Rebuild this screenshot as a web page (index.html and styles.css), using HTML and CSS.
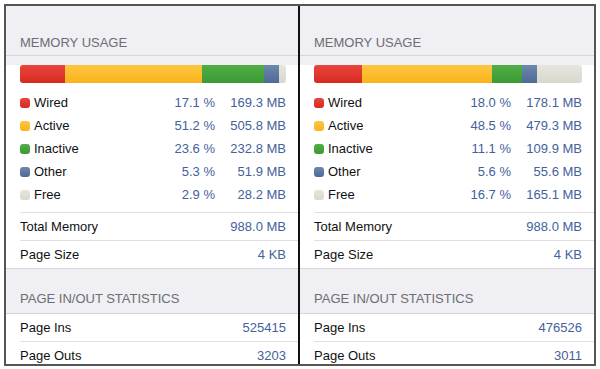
FILE: index.html
```html
<!DOCTYPE html>
<html lang="en">
<head>
    <meta charset="UTF-8">
    <title>Memory Usage</title>
    <link rel="stylesheet" href="styles.css">
</head>
<body>
    <div class="frame">
        <!-- Left device -->
        <div class="panel">
            <div class="section-header">Memory Usage</div>
            <div class="group">
                <div class="usage-bar">
                    <span class="seg wired" style="width: 17.1%"></span>
                    <span class="seg active" style="width: 51.2%"></span>
                    <span class="seg inactive" style="width: 23.6%"></span>
                    <span class="seg other" style="width: 5.3%"></span>
                    <span class="seg free" style="width: 2.8%"></span>
                </div>
                <div class="legend">
                    <div class="legend-row"><span class="label"><i class="dot wired"></i>Wired</span><span class="value">17.1 %</span><span class="value">169.3 MB</span></div>
                    <div class="legend-row"><span class="label"><i class="dot active"></i>Active</span><span class="value">51.2 %</span><span class="value">505.8 MB</span></div>
                    <div class="legend-row"><span class="label"><i class="dot inactive"></i>Inactive</span><span class="value">23.6 %</span><span class="value">232.8 MB</span></div>
                    <div class="legend-row"><span class="label"><i class="dot other"></i>Other</span><span class="value">5.3 %</span><span class="value">51.9 MB</span></div>
                    <div class="legend-row"><span class="label"><i class="dot free"></i>Free</span><span class="value">2.9 %</span><span class="value">28.2 MB</span></div>
                </div>
                <div class="row"><span>Total Memory</span><span class="value">988.0 MB</span></div>
                <div class="row"><span>Page Size</span><span class="value">4 KB</span></div>
            </div>
            <div class="section-header second">Page In/Out Statistics</div>
            <div class="group">
                <div class="row first"><span>Page Ins</span><span class="value">525415</span></div>
                <div class="row"><span>Page Outs</span><span class="value">3203</span></div>
            </div>
        </div>

        <!-- Right device -->
        <div class="panel">
            <div class="section-header">Memory Usage</div>
            <div class="group">
                <div class="usage-bar">
                    <span class="seg wired" style="width: 18.0%"></span>
                    <span class="seg active" style="width: 48.5%"></span>
                    <span class="seg inactive" style="width: 11.1%"></span>
                    <span class="seg other" style="width: 5.6%"></span>
                    <span class="seg free" style="width: 16.8%"></span>
                </div>
                <div class="legend">
                    <div class="legend-row"><span class="label"><i class="dot wired"></i>Wired</span><span class="value">18.0 %</span><span class="value">178.1 MB</span></div>
                    <div class="legend-row"><span class="label"><i class="dot active"></i>Active</span><span class="value">48.5 %</span><span class="value">479.3 MB</span></div>
                    <div class="legend-row"><span class="label"><i class="dot inactive"></i>Inactive</span><span class="value">11.1 %</span><span class="value">109.9 MB</span></div>
                    <div class="legend-row"><span class="label"><i class="dot other"></i>Other</span><span class="value">5.6 %</span><span class="value">55.6 MB</span></div>
                    <div class="legend-row"><span class="label"><i class="dot free"></i>Free</span><span class="value">16.7 %</span><span class="value">165.1 MB</span></div>
                </div>
                <div class="row"><span>Total Memory</span><span class="value">988.0 MB</span></div>
                <div class="row"><span>Page Size</span><span class="value">4 KB</span></div>
            </div>
            <div class="section-header second">Page In/Out Statistics</div>
            <div class="group">
                <div class="row first"><span>Page Ins</span><span class="value">476526</span></div>
                <div class="row"><span>Page Outs</span><span class="value">3011</span></div>
            </div>
        </div>
    </div>
</body>
</html>
```

FILE: styles.css
```css
body {
    margin: 0;
    padding: 4px;
    background: #fff;
    font-family: "Liberation Sans", Arial, sans-serif;
    font-size: 13px;
    color: #111;
}

/* Outer frame with the two screens */
.frame {
    display: grid;
    grid-template-columns: 292px 1fr;
    width: 588px;
    height: 358px;
    border: 2px solid #555;
    overflow: hidden;
}

.panel {
    background: #efeff4;
    overflow: hidden;
}

.panel + .panel {
    border-left: 2px solid #111;
}

/* Grey section headers */
.section-header {
    padding: 29px 12px 4px 14px;
    line-height: 16px;
    color: #6d6d72;
    text-transform: uppercase;
    border-bottom: 1px solid #d6d6da;
}

.section-header.second {
    padding-top: 22px;
    padding-bottom: 6px;
}

.group {
    background: #fff;
    padding-left: 14px;
    border-bottom: 1px solid #d6d6da;
}

/* Usage bar */
.usage-bar {
    display: flex;
    height: 18px;
    margin: 9px 12px 0 0;
    border-radius: 3px;
    overflow: hidden;
}

.seg {
    height: 100%;
}

.wired { background: linear-gradient(#e9463d, #d72a1f); }
.active { background: linear-gradient(#fdc640, #fab31c); }
.inactive { background: linear-gradient(#52ae47, #3b9a33); }
.other { background: linear-gradient(#6d88ae, #4d6a95); }
.free { background: linear-gradient(#e6e6de, #d8d8ce); }

/* Legend */
.legend {
    margin-top: 8px;
    padding: 0 12px 6px 0;
}

.legend-row {
    display: grid;
    grid-template-columns: 1fr 60px 71px;
    height: 23px;
    align-items: center;
}

.legend-row .value {
    text-align: right;
}

.label {
    display: flex;
    align-items: center;
}

.dot {
    width: 10px;
    height: 10px;
    border-radius: 3px;
    margin-right: 4px;
}

/* Plain rows */
.row {
    display: flex;
    justify-content: space-between;
    align-items: center;
    height: 27px;
    padding-right: 12px;
    border-top: 1px solid #e0e0e3;
}

.row.first {
    border-top: none;
}

.value {
    color: #43619c;
}
```
